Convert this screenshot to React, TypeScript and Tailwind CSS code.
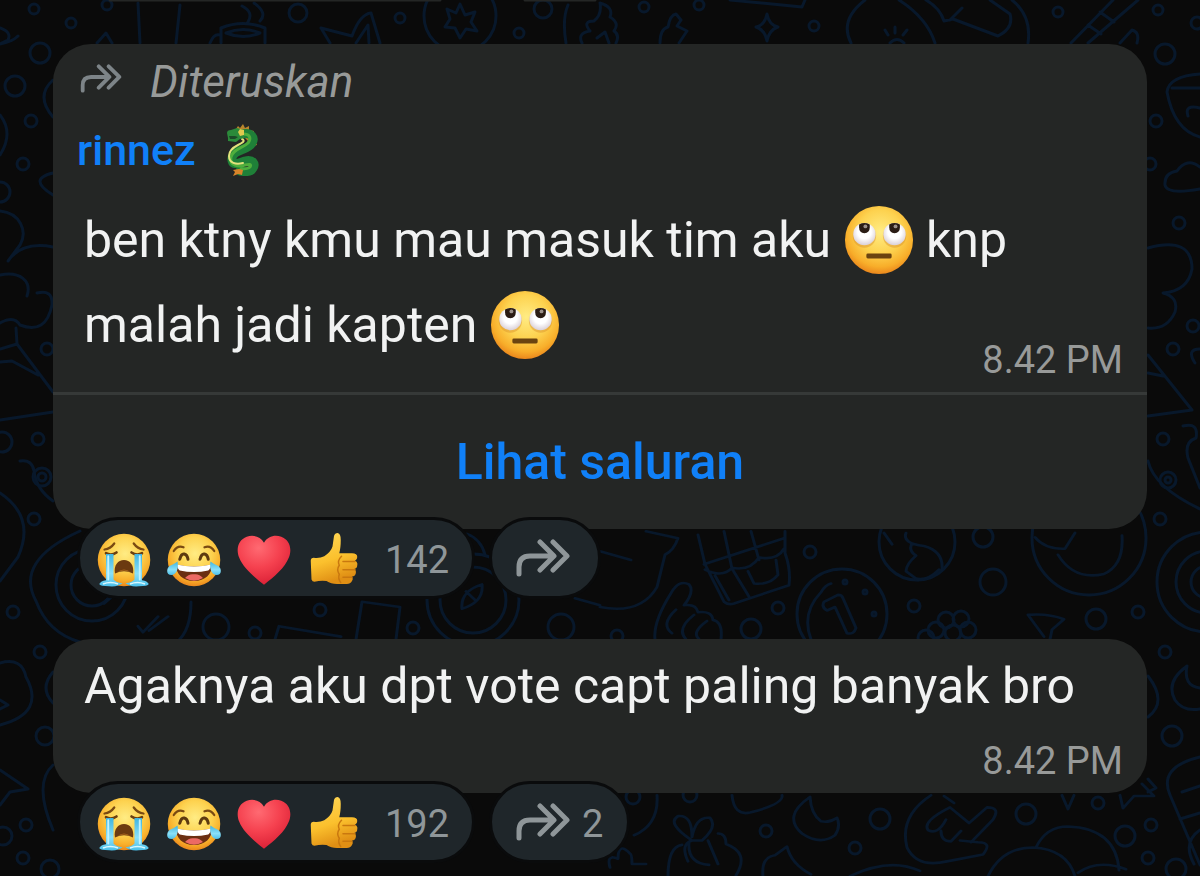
import type { ReactNode } from 'react';

type EmojiProps = { className?: string };

function Gradients() {
  return (
    <svg className="absolute h-0 w-0" aria-hidden="true">
      <defs>
        <radialGradient id="face" cx="0.52" cy="0.38" r="0.64">
          <stop offset="0" stopColor="#ffec84" />
          <stop offset="0.5" stopColor="#fdd24f" />
          <stop offset="0.8" stopColor="#f8ae2a" />
          <stop offset="1" stopColor="#e8801a" />
        </radialGradient>
        <radialGradient id="eyeball" cx="0.5" cy="0.4" r="0.6">
          <stop offset="0.5" stopColor="#ffffff" />
          <stop offset="1" stopColor="#d9cfd6" />
        </radialGradient>
        <radialGradient id="heart" cx="0.4" cy="0.25" r="0.8">
          <stop offset="0" stopColor="#ff6a72" />
          <stop offset="0.5" stopColor="#f5414f" />
          <stop offset="1" stopColor="#d91e34" />
        </radialGradient>
        <linearGradient id="thumb" x1="0" y1="0" x2="0.3" y2="1">
          <stop offset="0" stopColor="#ffd95a" />
          <stop offset="0.6" stopColor="#fbc02d" />
          <stop offset="1" stopColor="#e08f14" />
        </linearGradient>
        <linearGradient id="tear" x1="0" y1="0" x2="0" y2="1">
          <stop offset="0" stopColor="#3fb4e0" />
          <stop offset="0.6" stopColor="#8be0f8" />
          <stop offset="1" stopColor="#4cc0ea" />
        </linearGradient>
      </defs>
    </svg>
  );
}

function RollingEyes({ className }: EmojiProps) {
  return (
    <svg viewBox="0 0 72 72" className={className} role="img" aria-label="rolling eyes">
      <circle cx="36" cy="36" r="35" fill="url(#face)" />
      <circle cx="21" cy="32" r="12" fill="#d9902c" opacity="0.45" />
      <circle cx="52" cy="32" r="12" fill="#d9902c" opacity="0.45" />
      <circle cx="21" cy="30" r="11.5" fill="url(#eyeball)" />
      <circle cx="52" cy="30" r="11.5" fill="url(#eyeball)" />
      <path d="M15.500 20q5.500-3 11 0v3q0 6-5.500 6t-5.500-6z" fill="#2a1c14" />
      <path d="M46.500 20q5.500-3 11 0v3q0 6-5.500 6t-5.500-6z" fill="#2a1c14" />
      <circle cx="22" cy="22" r="2" fill="#9a8f88" />
      <circle cx="53" cy="22" r="2" fill="#9a8f88" />
      <rect x="23" y="50" width="26" height="5" rx="1.5" fill="#6a4310" />
    </svg>
  );
}

function Sobbing({ className }: EmojiProps) {
  return (
    <svg viewBox="0 0 72 72" className={className} role="img" aria-label="loudly crying">
      <circle cx="36" cy="36" r="35" fill="url(#face)" />
      <path d="M10 22q8-1 13-8M62 22q-8-1-13-8" fill="none" stroke="#7a4a12" strokeWidth="3" strokeLinecap="round" />
      <path d="M12 27q7 4 14-1M60 27q-7 4-14-1" fill="none" stroke="#6b3f10" strokeWidth="3.5" strokeLinecap="round" />
      <path d="M24 54c-2-11 4-18 12-18s14 7 12 18q-12-6-24 0z" fill="#6b3a10" />
      <path d="M27 52q9-7 18 0-9-4-18 0z" fill="#a8641c" />
      <path d="M12 28h10v34q3 4 12 5-6 5-18 4-12 0-13-3 2-4 9-5z" fill="url(#tear)" />
      <path d="M60 28H50v34q-3 4-12 5 6 5 18 4 12 0 13-3-2-4-9-5z" fill="url(#tear)" />
      <path d="M15 31v31M57 31v31" stroke="#c3f3ff" strokeWidth="2.5" strokeLinecap="round" />
      <path d="M8 68q10-4 20 0M44 68q10-4 20 0" fill="none" stroke="#d8f8ff" strokeWidth="2" />
    </svg>
  );
}

function TearsOfJoy({ className }: EmojiProps) {
  return (
    <svg viewBox="0 0 72 72" className={className} role="img" aria-label="tears of joy">
      <circle cx="36" cy="36" r="35" fill="url(#face)" />
      <path d="M9 24q5-8 13-5M63 24q-5-8-13-5" fill="none" stroke="#7a4a12" strokeWidth="3" strokeLinecap="round" />
      <path d="M17 35q2-8 6-7t5 7M44 35q2-8 6-7t5 7" fill="none" stroke="#5e3a10" strokeWidth="4" strokeLinecap="round" />
      <path d="M12 42q24 5 48 0c0 13-9 22-24 22S12 55 12 42z" fill="#6b2f12" />
      <path d="M13 42q23 5 46 0-1 6-4 8-19 4-38 0-3-2-4-8z" fill="#fff" />
      <path d="M24 60q5-6 12-5 7-1 12 5-12 7-24 0z" fill="#ec6a64" />
      <path d="M14 38c2 10-2 18-8 18-5 0-7-4-5-9 2-4 8-5 13-9z" fill="url(#tear)" />
      <path d="M58 38c-2 10 2 18 8 18 5 0 7-4 5-9-2-4-8-5-13-9z" fill="url(#tear)" />
    </svg>
  );
}

function Heart({ className }: EmojiProps) {
  return (
    <svg viewBox="0 0 72 72" className={className} role="img" aria-label="heart">
      <path
        d="M36 13C41 4 51 2 59 5c11 4 15 16 10 28-5 13-19 25-33 36C22 58 8 46 3 33-2 21 2 9 13 5c8-3 18-1 23 8z"
        fill="url(#heart)"
      />
    </svg>
  );
}

function ThumbsUp({ className }: EmojiProps) {
  return (
    <svg viewBox="0 0 72 72" className={className} role="img" aria-label="thumbs up">
      <path
        d="M5 37q0-4 4-4 8 1 14-2 9-6 11-13l2-14q1-4 5-4 4 1 4 9 0 11-2 18h17q7 0 7 5 0 4-3 5 4 2 3 6 0 4-4 5 3 2 2 6-1 4-5 4 2 3 0 6-2 4-7 4H40q-8 0-14-4-8-1-16 1-3 0-4-3z"
        fill="url(#thumb)"
      />
      <path
        d="M64 38H48M64 49H48M60 59H48M46 31q-6 6-3 12-4 6 0 12-2 6 2 11"
        fill="none"
        stroke="#c9780f"
        strokeWidth="2"
        strokeLinecap="round"
      />
    </svg>
  );
}

function Dragon({ className }: EmojiProps) {
  return (
    <svg viewBox="0 0 36 52" className={className} role="img" aria-label="dragon">
      <path d="M12 5l2-3 2 2 3-4 2 4 4-2v4l5 1-1 4 4 3-2 3 2 4-4 1" fill="#b8862c" />
      <path
        d="M18 10c10-2 13 4 10 9-4 8-19 6-20 15-1 9 7 5 13 3 8-2 11 3 8 7-2 4-8 4-13 3"
        fill="none"
        stroke="#1f8038"
        strokeWidth="9"
        strokeLinecap="round"
      />
      <path
        d="M19 10c8 0 8 5 5 9-5 5-15 6-17 14-2 9 8 10 14 8 4-1 7-1 5 2-2 2-6 2-9 2"
        fill="none"
        stroke="#4fae3c"
        strokeWidth="3"
        strokeLinecap="round"
      />
      <path d="M18 15c4 2 0 4-4 6-6 3-9 6-9 11 0 7 7 9 14 7" fill="none" stroke="#e3e27c" strokeWidth="2" strokeLinecap="round" />
      <path d="M3 9q0-3 4-3l6-2 7 2v8l-4 1-4 3-8-1v-3z" fill="#2b8a3a" />
      <path d="M5 12h6l3 1-3 2H6z" fill="#1c4a28" />
      <path d="M16 5l4 1v5l-4 1-2-4z" fill="#e0c94e" />
      <path d="M15 45l-6 1 2 2-2 4 5-2 4 1 1-5z" fill="#d8842a" />
    </svg>
  );
}

function ForwardIcon({ className }: EmojiProps) {
  return (
    <svg
      viewBox="0 0 54 38"
      className={className}
      fill="none"
      stroke="currentColor"
      strokeWidth="5"
      strokeLinecap="round"
      strokeLinejoin="round"
      aria-hidden="true"
    >
      <path d="M3 35v-7q0-11 11-11h22M24 3l14 14-14 14M37 3l14 14-14 14" />
    </svg>
  );
}

// [cx, cy, r]
const bubbles = [
  [34, 9, 5], [71, 23, 5], [107, 5, 5], [298, 13, 9], [400, 18, 5], [519, 33, 5], [543, 9, 9], [644, 7, 5],
  [699, 5, 5], [814, 26, 5], [1058, 12, 5], [1158, 10, 5], [1197, 23, 6], [40, 53, 10], [15, 86, 10],
  [31, 121, 6], [23, 164, 6], [0, 192, 10], [47, 349, 6], [2, 442, 10], [38, 439, 6], [42, 477, 9],
  [42, 477, 4], [34, 519, 6], [13, 612, 6], [40, 652, 6], [45, 736, 9], [3, 836, 9],
  [26, 825, 6], [23, 858, 6], [50, 869, 9], [216, 627, 13], [255, 633, 6], [320, 610, 6], [413, 628, 6],
  [561, 627, 13], [617, 636, 6], [751, 629, 10], [778, 608, 6], [810, 552, 6], [983, 537, 10],
  [993, 582, 13], [914, 606, 6], [1096, 619, 10], [1138, 612, 6], [1165, 54, 10], [1156, 121, 6],
  [1150, 164, 6], [1179, 223, 6], [1193, 326, 6], [1173, 349, 6], [1163, 439, 6], [1168, 480, 8],
  [1168, 480, 3], [1160, 519, 6], [1165, 652, 6], [1172, 736, 10], [1151, 825, 6], [1148, 858, 6],
  [1176, 869, 10], [633, 797, 7], [690, 795, 7], [880, 819, 10], [766, 831, 6], [855, 848, 6],
  [1026, 814, 10], [1098, 803, 6], [1125, 836, 10], [946, 620, 8], [961, 619, 8], [936, 630, 8],
  [953, 633, 8], [968, 630, 8], [926, 638, 8], [92, 585, 36], [92, 585, 21], [473, 600, 46], [473, 600, 33],
  [460, 16, 36], [842, 614, 45], [917, 542, 38], [1089, 538, 57], [1207, 582, 50], [1207, 582, 31],
  [1207, 582, 16], [845, 582, 2], [865, 592, 2], [874, 614, 2],
];

const topAndSides = [
  'M0 28q12 4 8 12l-8 4M97 43l9-10 6 10M138 3l2 40M180 5l-4 38M210 43q4-10 10-8M221 28q22-9 44 0v15M221 28v15',
  'M226 33q17-7 34 0-17 7-34 0zM242 6q12 6 6 16M254 3q14 10 6 18M321 28l9 15M321 28l31 8q8-22 19-23l9 30M356 43l12-18 1 18',
  'M460 4l5 11 10-3-4 10 6 9-11-2-6 9-5-10-10-1 5-8-3-10 9 4zM566 43q-4-24 2-38M582 43q-5-10 8-12-8-10 4-10 8-6 6-18 14 4 10 14 10 6 4 14 6 4 2 12M597 38l8-6 4 11',
  'M660 43q0-14 8-16 2-12 8-13l5 6-4 6 10 5-8 12M767 14q2 11 11 13-9 3-11 14-2-11-11-14 9-2 11-13z',
  'M865 0q-26 20-14 43M899 0q28 18 36 43M885 30l3 5M895 27v6M907 30l-4 5M890 43q7-7 14 0M926 0q14 8 18 21l9-2 45 17q16-8 12-22L990 0M950 20l12-12M1113 0l-42 43M1138 0l-50 43M1100 12l14 10M1088 25l13 9M1120 43l12-13q8 2 5 13M1012 0q20 16 16 43M730 0l72 7 3-7',
  'M0 44q12-2 18-8M53 80q-18 16 0 37M0 115q14 18 0 40M53 173q-26 6 0 22M0 211c20 2 28 20 20 34l-12 16q14-20 45-14M0 275c20-4 32 6 27 21M37 293q16-4 15 12-6 30-32 20-6-10-20-2M16 328l1 16 36 48M0 349l17-5M0 362l12-1 26 14M0 420l53-8',
  'M20 461q12-2 14 10 2 18 19 30M0 493q36 24 18 64l-18 24M0 663q22-6 26 14 20 36-26 48M0 700l8 5-8 4M53 672q-14 16 0 31M0 770l28 19-18 3-10 13M53 765q-20 18 0 65',
  'M80 531q-66 30-44 70 12 32 44 41M191 602q0 28-14 40',
  'M1200 74q-31 2-33 18 7 38 33 45M1172 88h28M1188 116q-4-12 12-8M1165 185q-1-12 12-14 10-14 23-4M1165 185q2 10 35 4M1148 248q44-12 44 21-4 22-29 24 16 4 12 19-8 18-27 16M1148 355l44 55-44 6M1148 373l15 3M1200 349q-14 0-5 14',
  'M1183 426q16-4 13 12-12 4-8 20l12 30M1148 461q6 26 52 48M1187 666q-22 16-12 34 8 12 25 9M1187 666q-4 20 13 22M1148 676q20 26 0 41M1148 779l8 9-8 4M1200 757q-42 10-30 38l30 70M1182 792l18-6M1180 819l20-6M1200 830q-18 12-6 34',
];

const middle = [
  'M138 642l5 7 15-18M149 647l19-16M275 657l4-15 62 12M356 657l6-43 38 6-4 37M467 536q14 6 18 24M462 622q-2-20 20-28 2 20-20 28zM466 602l10 11M104 616l10-10M575 610l25 8',
  'M646 533l32 8q-4 14-13 19l-8 37q-16 32-57 23M600 556l31 10M655 657q-2-20 16-53 8-16 18-10 6 8-5 24 12-2 14 8 14-2 15 9 10 2 8 22M672 650q-12-10 4-27M686 657q-10-12 8-28M699 657q-8-8 8-21',
  'M698 537l7 34 19 43q4 4 10 2l55-21q2-18-4-37v-25M704 571l80-30M724 533l8 43 17 32M751 533l8 33M705 577q18 10 27-2 18 4 27-12 18 4 25-10M748 579l6 14q16 2 24-10l-2-17M715 584l14 28',
  'M821 603q-20 24-10 54M824 614l14-8q4 0 5 4l13 34q-2 8-9 6l-12-30-8 4q-6-4-3-10zM821 603q4-8 10-10M906 535q-4 12 18 15 20 6 18 28M912 547q-4 8 4 14-10 10-10 18l12 10M884 535l8 13M939 577q-12 14-24 10',
  'M1028 629q20-2 36 5l-12 12-2 11M1028 629l16 25M1035 540q10 14 30 13l10-18M1058 560q16 30 46 22 20-10 18-44',
];

const bottom = [
  'M657 797q2 34-23 46M732 797q2 24 18 20 34-10 32-20M810 799q-28 22-8 42 18 14 33 2 6-10 2-20-8 6-16 4-10-8-11-28z',
  'M692 849q-26-20-14-28 14-2 14 24 4-24 18-22 8 10-8 26zM692 849q-12 4-4 24M708 849l10 27M718 841q8 0 8 12 24 10 10 36M668 890q0-34 14-36M689 851q-2 24 20 26M610 880q-4-16 8-10 0-20 12-6 2 0 2 12h14M763 890q-2-22 12-24l12-10q4 20 24 32M850 890q40-22 70-6',
  'M931 797q-32 24-24 60 10 24 40 16l36-8q10-14-5-14l-18-2M971 851l22-26q8-14-6-14l-18 18-19-18q-28 16-22 26 10 6 18-12M941 838q0 12 10 12l10-12M954 806l-10-8M1036 857q10-24 32-24 48 2 51 50M988 890q14-33 45-33 34 2 42 33M1078 886q20-16 48-4M1062 797l6 16 6-16M1120 797l3 15 11-14h20l-12-14',
];

function Wallpaper() {
  return (
    <svg
      viewBox="0 0 1200 876"
      preserveAspectRatio="xMidYMin slice"
      className="absolute inset-0 h-full w-full"
      fill="none"
      stroke="#08182b"
      strokeWidth="3"
      strokeLinecap="round"
      strokeLinejoin="round"
      aria-hidden="true"
    >
      {bubbles.map(([cx, cy, r], i) => (
        <circle key={i} cx={cx} cy={cy} r={r} />
      ))}
      <path d={topAndSides.join('')} />
      <path d={middle.join('')} transform="translate(0 67) scale(1 0.871)" />
      <path d={bottom.join('')} transform="translate(0 101) scale(1 0.871)" />
      <path d="M110 0h330M525 0h70" stroke="#242625" />
    </svg>
  );
}

function Bubble({ children }: { children: ReactNode }) {
  return <article className="flex flex-col rounded-[38px] bg-[#242625] text-[#f1f2f2]">{children}</article>;
}

function Time() {
  return <time className="self-end pr-6 text-[38px] leading-[48px] text-[#989a99]">8.42 PM</time>;
}

function Reactions({ count, forwards }: { count: number; forwards?: number }) {
  const pill =
    'flex h-[82px] items-center rounded-full border-3 border-[#0a0b0c] bg-[#1f262a] pt-1 text-[38px] text-[#8f9699]';
  return (
    <div className="relative -mt-3 flex gap-[14px] pl-6">
      <button className={`${pill} gap-4 pr-[23px] pl-[17px]`}>
        <Sobbing className="size-[54px]" />
        <TearsOfJoy className="size-[54px]" />
        <Heart className="size-[54px]" />
        <ThumbsUp className="size-[54px]" />
        <span className="pl-2">{count}</span>
      </button>
      <button className={`${pill} gap-3 ${forwards ? 'pr-6' : 'pr-7'} pl-6`} aria-label="Teruskan">
        <ForwardIcon className="mb-1 h-[38px] w-[54px]" />
        {forwards && <span>{forwards}</span>}
      </button>
    </div>
  );
}

export default function App() {
  return (
    <main className="relative min-h-screen overflow-hidden bg-[#0a0a0a] font-['Roboto',sans-serif]">
      <Gradients />
      <Wallpaper />
      <div className="relative px-[53px] pt-11">
        <Bubble>
          <div className="mt-[14px] flex h-12 items-center gap-7 pl-[27px] text-[#989a99]">
            <ForwardIcon className="mb-2 h-[29px] w-[42px] text-[#7d8488]" />
            <span className="text-[44px] italic">Diteruskan</span>
          </div>
          <div className="mt-5 flex h-12 items-center gap-7 pl-6">
            <a href="#rinnez" className="text-[43px] font-medium text-[#1080f8]">
              rinnez
            </a>
            <Dragon className="h-[52px] w-9" />
          </div>
          <p className="mt-6 px-[31px] text-[50px] leading-[85px]">
            ben ktny kmu mau masuk tim aku <RollingEyes className="mb-2 inline size-[70px]" /> knp
            <br />
            malah jadi kapten <RollingEyes className="mb-2 inline size-[70px]" />
          </p>
          <div className="-mt-8 flex flex-col pb-2">
            <Time />
          </div>
          <button className="h-[137px] border-t-3 border-[#363938] text-[50px] font-medium text-[#1080f8]">
            Lihat saluran
          </button>
        </Bubble>
        <Reactions count={142} />

        <div className="mt-10">
          <Bubble>
            <p className="px-[31px] pt-1 text-[50px] leading-[86px]">Agaknya aku dpt vote capt paling banyak bro</p>
            <div className="mt-2 flex flex-col pb-2">
              <Time />
            </div>
          </Bubble>
          <Reactions count={192} forwards={2} />
        </div>
      </div>
    </main>
  );
}
